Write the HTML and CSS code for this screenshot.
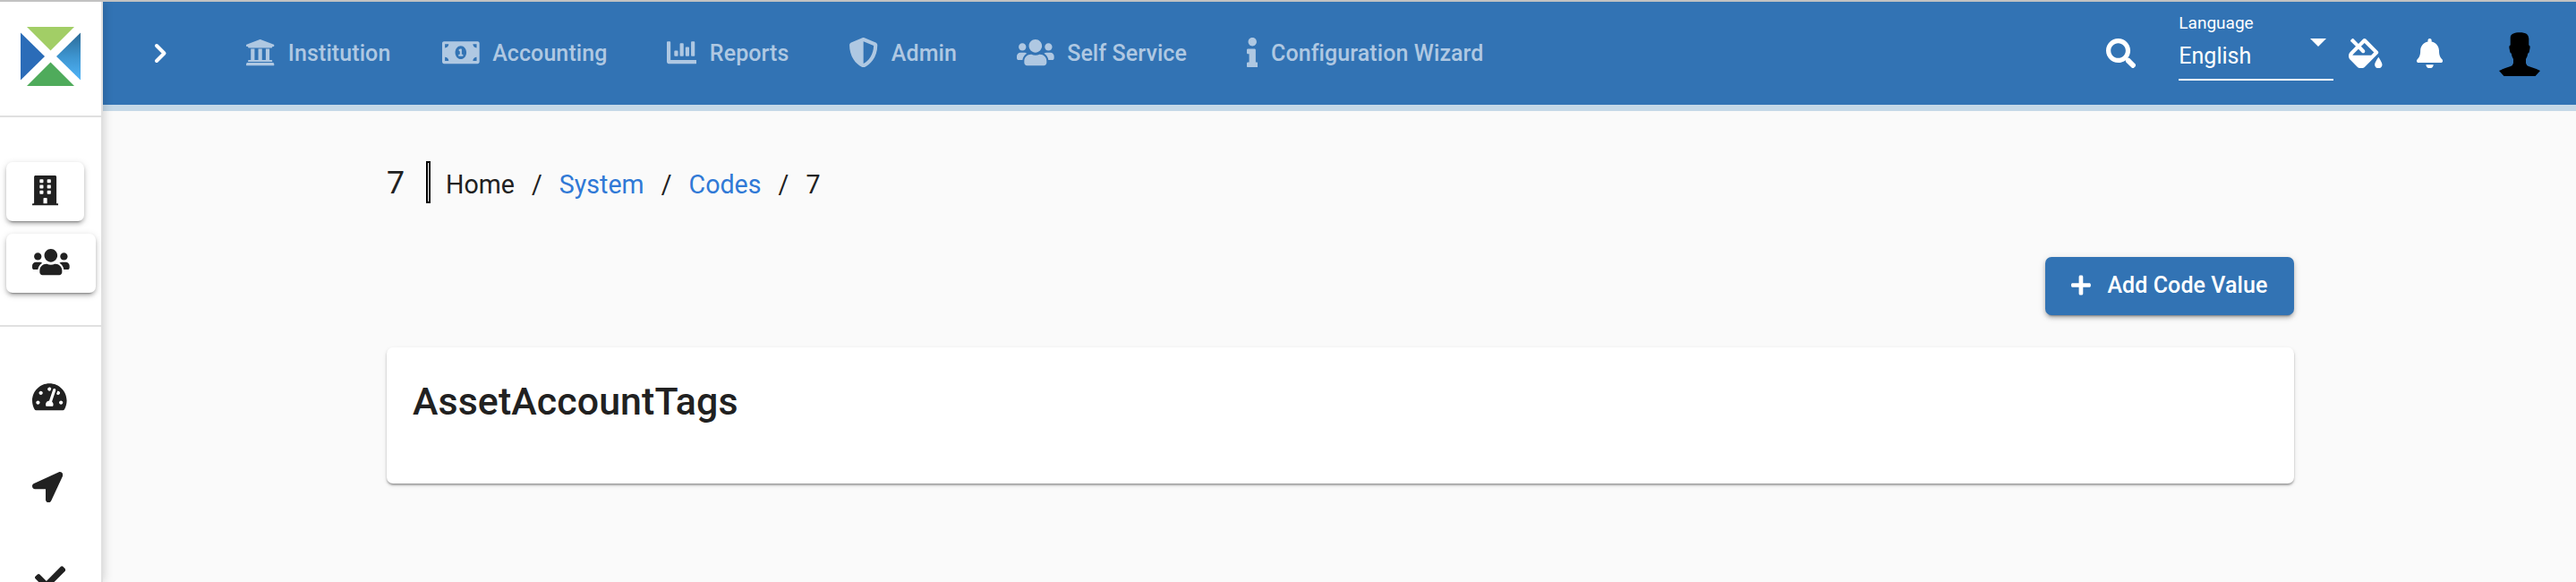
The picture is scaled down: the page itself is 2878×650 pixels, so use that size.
FILE: index.html
```html
<!DOCTYPE html>
<html lang="en">
<head>
<meta charset="utf-8">
<title>Code Values</title>
<link rel="stylesheet" href="styles.css">
</head>
<body>
<div class="app">
  <aside class="sidebar">
    <div class="brand">
      <svg class="logo" viewBox="0 0 67 66">
        <defs><linearGradient id="sky" x1="0" y1="0" x2="0" y2="1"><stop offset="0" stop-color="#2c6a96"/><stop offset=".5" stop-color="#3d94cf"/><stop offset="1" stop-color="#4fb4f8"/></linearGradient></defs>
        <path fill="#a2ce66" d="M7 0h53L33.500 26.500z"/>
        <path fill="#2b6cb8" d="M0 6.500v53L27 33z"/>
        <path fill="url(#sky)" d="M67 6.500v53L40 33z"/>
        <path fill="#4fab5b" d="M33.500 39.500L60 66H7z"/>
      </svg>
    </div>
    <div class="shortcuts">
      <button class="tile tile-office"><svg class="icon" viewBox="0 0 448 512"><path d="M436 480h-20V24c0-13.255-10.745-24-24-24H56C42.745 0 32 10.745 32 24v456H12c-6.627 0-12 5.373-12 12v20h448v-20c0-6.627-5.373-12-12-12zM128 76c0-6.627 5.373-12 12-12h40c6.627 0 12 5.373 12 12v40c0 6.627-5.373 12-12 12h-40c-6.627 0-12-5.373-12-12V76zm0 96c0-6.627 5.373-12 12-12h40c6.627 0 12 5.373 12 12v40c0 6.627-5.373 12-12 12h-40c-6.627 0-12-5.373-12-12v-40zm52 148h-40c-6.627 0-12-5.373-12-12v-40c0-6.627 5.373-12 12-12h40c6.627 0 12 5.373 12 12v40c0 6.627-5.373 12-12 12zm76 160h-64v-84c0-6.627 5.373-12 12-12h40c6.627 0 12 5.373 12 12v84zm64-172c0 6.627-5.373 12-12 12h-40c-6.627 0-12-5.373-12-12v-40c0-6.627 5.373-12 12-12h40c6.627 0 12 5.373 12 12v40zm0-96c0 6.627-5.373 12-12 12h-40c-6.627 0-12-5.373-12-12v-40c0-6.627 5.373-12 12-12h40c6.627 0 12 5.373 12 12v40zm0-96c0 6.627-5.373 12-12 12h-40c-6.627 0-12-5.373-12-12V76c0-6.627 5.373-12 12-12h40c6.627 0 12 5.373 12 12v40z"/></svg></button>
      <button class="tile tile-clients"><svg class="icon" viewBox="0 0 640 512"><path id="users" d="M96 224c35.3 0 64-28.7 64-64s-28.7-64-64-64-64 28.7-64 64 28.7 64 64 64zm448 0c35.3 0 64-28.7 64-64s-28.7-64-64-64-64 28.7-64 64 28.7 64 64 64zm32 32h-64c-17.6 0-33.5 7.1-45.1 18.6 40.3 22.1 68.9 62 75.1 109.4h66c17.7 0 32-14.3 32-32v-32c0-35.3-28.7-64-64-64zm-256 0c61.9 0 112-50.1 112-112S381.9 32 320 32 208 82.1 208 144s50.1 112 112 112zm76.8 32h-8.3c-20.8 10-43.9 16-68.5 16s-47.6-6-68.5-16h-8.3C179.6 288 128 339.6 128 403.2V432c0 26.5 21.5 48 48 48h288c26.5 0 48-21.5 48-48v-28.8c0-63.6-51.6-115.2-115.2-115.2zm-223.7-13.4C161.5 263.1 145.6 256 128 256H64c-35.3 0-64 28.7-64 64v32c0 17.7 14.3 32 32 32h65.900c6.3-47.4 34.9-87.3 75.2-109.4z"/></svg></button>
    </div>
    <div class="links">
      <svg class="icon" viewBox="0 0 576 512"><path d="M288 32C128.94 32 0 160.94 0 320c0 52.8 14.25 102.26 39.06 144.8 5.61 9.62 16.3 15.2 27.44 15.2h443c11.14 0 21.83-5.58 27.44-15.2C561.75 422.26 576 372.8 576 320c0-159.06-128.94-288-288-288zm0 64c14.71 0 26.58 10.13 30.32 23.65-1.11 2.26-2.64 4.23-3.45 6.67l-9.22 27.67c-5.13 3.49-10.97 6.01-17.64 6.01-17.67 0-32-14.33-32-32S270.33 96 288 96zM96 384c-17.67 0-32-14.33-32-32s14.33-32 32-32 32 14.33 32 32-14.33 32-32 32zm48-160c-17.67 0-32-14.33-32-32s14.33-32 32-32 32 14.33 32 32-14.33 32-32 32zm246.77-72.41l-61.33 184C343.13 347.33 352 364.54 352 384c0 11.72-3.38 22.55-8.88 32H232.88c-5.5-9.45-8.88-20.28-8.88-32 0-33.94 26.5-61.43 59.9-63.59l61.34-184.01c4.17-12.56 17.73-19.45 30.36-15.17 12.57 4.19 19.35 17.79 15.17 30.36zm14.66 57.2l15.52-46.55c3.47-1.29 7.13-2.23 11.05-2.23 17.67 0 32 14.33 32 32s-14.33 32-32 32c-11.38-.01-20.89-6.28-26.57-15.22zM480 384c-17.67 0-32-14.33-32-32s14.33-32 32-32 32 14.33 32 32-14.33 32-32 32z"/></svg>
      <svg class="icon" viewBox="0 0 512 512"><path d="M444.52 3.52L28.74 195.42c-47.97 22.39-31.98 92.75 19.19 92.75h175.91v175.91c0 51.17 70.36 67.17 92.75 19.19l191.9-415.78c15.99-38.39-25.59-79.97-63.97-63.97z"/></svg>
      <svg class="icon icon-check" viewBox="0 0 512 512"><path d="M173.898 439.404l-166.4-166.4c-9.997-9.997-9.997-26.206 0-36.204l36.203-36.204c9.997-9.998 26.207-9.998 36.204 0L192 312.69 432.095 72.596c9.997-9.997 26.207-9.997 36.204 0l36.203 36.204c9.997 9.997 9.997 26.206 0 36.204l-294.4 294.401c-9.998 9.997-26.207 9.997-36.204-.001z"/></svg>
    </div>
  </aside>
  <div class="page">
    <header class="toolbar">
      <svg class="expand" viewBox="0 0 16 23"><path d="M3 3l8.500 8.500L3 20"/></svg>
      <nav class="menu">
        <a class="menu-item"><svg class="icon" viewBox="0 0 512 512"><path d="M496 128v16a8 8 0 0 1-8 8h-24v12c0 6.627-5.373 12-12 12H60c-6.627 0-12-5.373-12-12v-12H24a8 8 0 0 1-8-8v-16a8 8 0 0 1 4.941-7.392l232-88a7.996 7.996 0 0 1 6.118 0l232 88A8 8 0 0 1 496 128zm-24 304H40c-13.255 0-24 10.745-24 24v16a8 8 0 0 0 8 8h464a8 8 0 0 0 8-8v-16c0-13.255-10.745-24-24-24zM96 192v192H60c-6.627 0-12 5.373-12 12v20h416v-20c0-6.627-5.373-12-12-12h-36V192h-64v192h-64V192h-64v192h-64V192H96z"/></svg><span>Institution</span></a>
        <a class="menu-item"><svg class="icon" viewBox="0 0 640 512"><path d="M352 288h-16v-88c0-4.42-3.58-8-8-8h-13.58c-4.74 0-9.37 1.4-13.31 4.03l-15.33 10.22a7.994 7.994 0 0 0-2.22 11.09l8.88 13.31a7.994 7.994 0 0 0 11.09 2.22l.47-.31V288h-16c-4.42 0-8 3.58-8 8v16c0 4.42 3.58 8 8 8h64c4.42 0 8-3.58 8-8v-16c0-4.42-3.58-8-8-8zM608 64H32C14.33 64 0 78.33 0 96v320c0 17.67 14.33 32 32 32h576c17.67 0 32-14.33 32-32V96c0-17.67-14.33-32-32-32zM48 400v-64c35.35 0 64 28.65 64 64H48zm0-224v-64h64c0 35.35-28.65 64-64 64zm272 192c-53.02 0-96-50.15-96-112 0-61.86 42.98-112 96-112s96 50.14 96 112c0 61.87-43 112-96 112zm272 32h-64c0-35.35 28.65-64 64-64v64zm0-224c-35.35 0-64-28.65-64-64h64v64z"/></svg><span>Accounting</span></a>
        <a class="menu-item"><svg class="icon" viewBox="0 0 512 512"><path d="M332.8 320h38.4c6.4 0 12.8-6.4 12.8-12.8V172.8c0-6.4-6.4-12.8-12.8-12.8h-38.4c-6.4 0-12.8 6.4-12.8 12.8v134.4c0 6.4 6.4 12.8 12.8 12.8zm96 0h38.4c6.4 0 12.8-6.4 12.8-12.8V76.8c0-6.4-6.4-12.8-12.8-12.8h-38.4c-6.4 0-12.8 6.4-12.8 12.8v230.4c0 6.4 6.4 12.8 12.8 12.8zm-288 0h38.4c6.4 0 12.8-6.4 12.8-12.8v-70.400c0-6.4-6.4-12.8-12.8-12.8h-38.4c-6.4 0-12.8 6.4-12.8 12.8v70.400c0 6.4 6.4 12.8 12.8 12.8zm96 0h38.4c6.4 0 12.8-6.4 12.8-12.8V108.8c0-6.4-6.4-12.8-12.8-12.8h-38.4c-6.4 0-12.8 6.4-12.8 12.8v198.4c0 6.4 6.4 12.8 12.8 12.8zM496 384H64V80c0-8.840-7.160-16-16-16H16C7.160 64 0 71.160 0 80v336c0 17.670 14.330 32 32 32h464c8.840 0 16-7.160 16-16v-32c0-8.840-7.160-16-16-16z"/></svg><span>Reports</span></a>
        <a class="menu-item"><svg class="icon" viewBox="0 0 512 512"><path d="M466.5 83.7l-192-80a48.15 48.15 0 0 0-36.9 0l-192 80C27.7 91.1 16 108.6 16 128c0 198.5 114.5 335.7 221.5 380.3 11.8 4.9 25.1 4.9 36.9 0C360.1 472.6 496 349.3 496 128c0-19.4-11.7-36.9-29.5-44.3zM256.1 446.3l-.1-381 175.9 73.3c-3.3 151.4-82.1 261.1-175.800 307.7z"/></svg><span>Admin</span></a>
        <a class="menu-item"><svg class="icon" viewBox="0 0 640 512"><use href="#users"/></svg><span>Self Service</span></a>
        <a class="menu-item"><svg class="icon" viewBox="0 0 192 512"><path d="M20 424.229h20V279.771H20c-11.046 0-20-8.954-20-20V212c0-11.046 8.954-20 20-20h112c11.046 0 20 8.954 20 20v212.229h20c11.046 0 20 8.954 20 20V492c0 11.046-8.954 20-20 20H20c-11.046 0-20-8.954-20-20v-47.771c0-11.046 8.954-20 20-20zM96 0C56.235 0 24 32.235 24 72s32.235 72 72 72 72-32.235 72-72S135.764 0 96 0z"/></svg><span>Configuration Wizard</span></a>
      </nav>
      <div class="tools">
        <svg class="icon" viewBox="0 0 512 512"><path d="M505 442.7L405.3 343c-4.5-4.5-10.6-7-17-7H372c27.6-35.3 44-79.7 44-128C416 93.1 322.9 0 208 0S0 93.1 0 208s93.1 208 208 208c48.3 0 92.7-16.4 128-44v16.3c0 6.4 2.5 12.5 7 17l99.7 99.7c9.4 9.4 24.6 9.4 33.9 0l28.3-28.3c9.4-9.4 9.4-24.6.1-34zM208 336c-70.7 0-128-57.2-128-128 0-70.7 57.2-128 128-128 70.7 0 128 57.2 128 128 0 70.7-57.2 128-128 128z"/></svg>
        <div class="language">
          <label class="language-label">Language</label>
          <div class="language-value"><span>English</span><i class="caret"></i></div>
        </div>
        <svg class="icon icon-fill" viewBox="0 0 576 512"><path d="M512 320s-64 92.65-64 128c0 35.35 28.66 64 64 64s64-28.65 64-64-64-128-64-128zm-9.37-102.94L294.94 9.37C288.69 3.12 280.5 0 272.31 0s-16.38 3.12-22.62 9.37l-81.58 81.58L81.93 4.76c-6.25-6.25-16.38-6.25-22.62 0L36.69 27.38c-6.24 6.25-6.24 16.38 0 22.62l86.19 86.18-94.76 94.76c-37.49 37.48-37.49 98.26 0 135.75l117.19 117.19c18.74 18.74 43.31 28.12 67.87 28.12 24.57 0 49.13-9.37 67.87-28.12l221.57-221.57c12.5-12.5 12.5-32.75.01-45.25zm-116.22 70.97H65.93c1.36-3.84 3.57-7.98 7.43-11.83l13.15-13.15 81.61-81.61 58.6 58.6c12.49 12.49 32.75 12.49 45.24 0s12.49-32.75 0-45.24l-58.6-58.6 58.95-58.95 162.44 162.44-48.34 48.34z"/></svg>
        <svg class="icon icon-bell" viewBox="0 0 448 512"><path d="M224 512c35.32 0 63.97-28.65 63.97-64H160.03c0 35.35 28.65 64 63.97 64zm215.39-149.71c-19.32-20.76-55.47-51.99-55.47-154.29 0-77.7-54.48-139.9-127.94-155.16V32c0-17.67-14.32-32-31.98-32s-31.98 14.33-31.98 32v20.84C118.56 68.1 64.08 130.3 64.08 208c0 102.3-36.15 133.53-55.47 154.29-6 6.45-8.66 14.16-8.61 21.71.11 16.4 12.98 32 32.1 32h383.8c19.12 0 32-15.6 32.1-32 .05-7.55-2.61-15.27-8.61-21.71z"/></svg>
        <svg class="avatar" viewBox="0 0 46 49"><path d="M16 1.500C19-.2 28-.3 31 2q2.300 2 2.300 5v7.500q1.800 0 1.200 3.500l-.8 4q-.3 1.500-1.400 1.500-.4 3.500-2.300 6.500v4.500q.5 2.500 3 3.500Q41 40.500 46 43l-5.500 6h-35L0 43q5-2.500 13-5 2.500-1 3-3.500V30q-1.900-3-2.300-6.500-1.100 0-1.400-1.500l-.8-4q-.6-3.500 1.200-3.500V6q0-3.500 3.300-4.500z"/></svg>
      </div>
    </header>
    <main class="content">
      <div class="heading">
        <span class="heading-title">7</span>
        <span class="divider"></span>
        <div class="crumbs"><span>Home</span><i>/</i><a>System</a><i>/</i><a>Codes</a><i>/</i><span>7</span></div>
      </div>
      <div class="actions">
        <button class="add"><svg class="plus" viewBox="0 0 448 512"><path d="M416 208H272V64c0-17.67-14.33-32-32-32h-32c-17.67 0-32 14.33-32 32v144H32c-17.67 0-32 14.33-32 32v32c0 17.67 14.33 32 32 32h144v144c0 17.67 14.33 32 32 32h32c17.67 0 32-14.33 32-32V304h144c17.67 0 32-14.33 32-32v-32c0-17.67-14.33-32-32-32z"/></svg><span>Add Code Value</span></button>
      </div>
      <section class="card"><h1 class="card-title">AssetAccountTags</h1></section>
    </main>
  </div>
</div>
</body>
</html>
```
FILE: styles.css
```css
* { box-sizing: border-box; }
body { margin: 0; font-family: Roboto, sans-serif; color: #212121; background: #fafafa; }
svg { display: block; flex: none; fill: currentColor; }
button { border: 0; padding: 0; font: inherit; color: inherit; }
.app { display: flex; height: 650px; overflow: hidden; border-top: 2px solid #c2c2c2; }
.icon { height: 33.33px; }

.sidebar { width: 115px; flex: none; background: #fff; border-right: 2px solid #e0e0e0; box-shadow: 0 0 11px rgba(0,0,0,.2); position: relative; z-index: 1; }
.brand { height: 129px; padding: 28px 0 0 23px; border-bottom: 2px solid #e0e0e0; }
.logo { width: 67px; height: 66px; }
.shortcuts { height: 234px; padding: 50px 0 0 7px; border-bottom: 2px solid #e0e0e0; display: flex; flex-direction: column; gap: 14px; }
.tile { height: 66px; padding: 0 0 2px 29px; display: flex; align-items: center; background: #fff; border-radius: 7px; box-shadow: 0 5px 2px -4px rgba(0,0,0,.3), 0 3px 4px rgba(0,0,0,.2), 0 2px 9px rgba(0,0,0,.14); }
.tile-office { width: 87px; }
.tile-clients { width: 100px; }
.links { padding: 61px 0 0 36px; display: flex; flex-direction: column; align-items: flex-start; gap: 66.5px; }
.links .icon { height: 34.3px; }
.links .icon-check { margin-left: 3px; }

.page { flex: 1; min-width: 0; }
.toolbar { height: 122px; display: flex; padding-left: 57px; background: #3273b4; border-bottom: 7px solid #c5d8e7; color: #fff; }
.expand { width: 16px; height: 23px; margin-top: 46px; fill: none; stroke: #fff; stroke-width: 4; stroke-linecap: round; stroke-linejoin: round; }
.menu { display: grid; grid-template-columns: 220px 251px 203px 188px 257px 300px; margin-left: 86px; color: #afc8e2; height: 115px; padding-top: 40px; align-items: start; }
.menu-item { display: flex; align-items: flex-start; gap: 14.5px; font-size: 25px; font-weight: 500; line-height: 36px; letter-spacing: .09px; white-space: nowrap; }
.tools { margin-left: auto; display: flex; padding-right: 40px; }
.tools .icon { margin-top: 41px; }
.language { width: 173px; margin: 10px 17px 0 48px; height: 78px; border-bottom: 2px solid #fff; }
.language-label { display: block; font-size: 19px; line-height: 28px; }
.language-value { display: flex; justify-content: space-between; font-size: 25px; line-height: 32px; padding: 7px 8px 0 0; }
.caret { width: 0; height: 0; border: 9px solid transparent; border-top-color: #fff; border-bottom: 0; margin-top: -4px; }
.icon-bell { margin-left: 38px; }
.avatar { width: 46px; height: 49px; margin: 34px 0 0 63px; color: #000; }

.content { width: 2131px; margin-left: 317px; padding-top: 56px; }
.heading { display: flex; height: 47px; }
.heading-title { width: 44px; font-size: 35.7px; line-height: 49px; }
.divider { width: 5px; height: 47px; flex: none; border: 2px solid #000; background: #fff; }
.crumbs { display: flex; margin-left: 17px; font-size: 28.57px; line-height: 53px; }
.crumbs i { font-style: normal; margin: 0 19.1px; }
.crumbs a { color: #3079d6; }
.actions { display: flex; justify-content: flex-end; margin-top: 60px; }
.add { width: 278px; height: 65px; display: flex; align-items: center; padding: 0 0 2px 29px; gap: 18.5px; color: #fff; background: #3273b4; border-radius: 7px; font-size: 25px; font-weight: 500; letter-spacing: .09px; white-space: nowrap; box-shadow: 0 5px 2px -4px rgba(0,0,0,.3), 0 3px 4px rgba(0,0,0,.2), 0 2px 9px rgba(0,0,0,.14); }
.plus { height: 25px; }
.card { height: 152px; margin-top: 36px; padding: 29px; background: #fff; border-radius: 7px; box-shadow: 0 4px 2px -4px rgba(0,0,0,.3), 0 2px 2px rgba(0,0,0,.25), 0 2px 5px rgba(0,0,0,.12); }
.card-title { margin: 0; font-size: 42.86px; font-weight: 500; line-height: 62px; letter-spacing: .1px; }
```
